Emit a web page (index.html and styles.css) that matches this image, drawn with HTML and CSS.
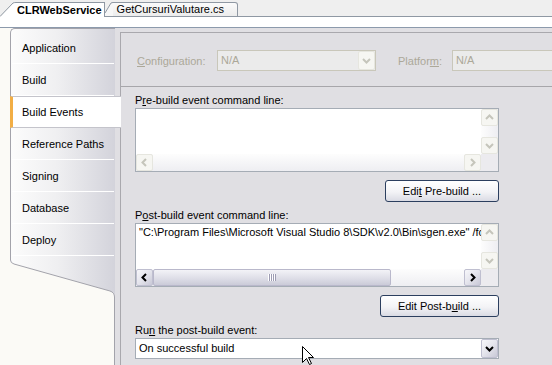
FILE: index.html
```html
<!DOCTYPE html>
<html lang="en">
<head>
  <meta charset="UTF-8" />
  <title>CLRWebService - Build Events</title>
  <link rel="stylesheet" href="styles.css">
</head>
<body>
  <!-- document tab strip -->
  <div class="doc-tabs">
    <svg class="tab-slant" width="16" height="17" viewBox="0 0 16 17">
      <path d="M0 17 L13 3.5 Q14 2 16 2 L16 17 Z" fill="#fff"/>
      <path d="M0 16.5 L13 3 Q14 2.5 16 2.5" fill="none" stroke="#8f98a3"/>
    </svg>
    <div class="doc-tab active">CLRWebService</div>
    <svg class="tab-peek" width="8" height="17" viewBox="0 0 8 17">
      <path d="M0 13 L6 3.5 Q7 2.5 8 2.5 L8 16 L0 16 Z" fill="#f7f7f7"/>
      <path d="M0 13 L6 3 Q7 2.5 8 2.5" fill="none" stroke="#8f98a3"/>
      <path d="M0 16.5 H8" stroke="#8f98a3"/>
    </svg>
    <div class="doc-tab">GetCursuriValutare.cs</div>
    <div class="doc-tabs-fill"></div>
  </div>
  <div class="doc-well"></div>

  <div class="designer">
    <!-- left property page tabs -->
    <div class="nav">
      <div class="nav-list">
        <div class="nav-item">Application</div>
        <div class="nav-item">Build</div>
        <div class="nav-item selected">Build Events</div>
        <div class="nav-item">Reference Paths</div>
        <div class="nav-item">Signing</div>
        <div class="nav-item">Database</div>
        <div class="nav-item">Deploy</div>
      </div>
      <svg class="nav-tail" width="105" height="41" viewBox="0 0 105 41">
        <defs>
          <linearGradient id="navGrad" x1="0" y1="0" x2="105" y2="0" gradientUnits="userSpaceOnUse">
            <stop offset="0" stop-color="#fcfcfc"/>
            <stop offset="0.45" stop-color="#efeff1"/>
            <stop offset="1" stop-color="#d3d3db"/>
          </linearGradient>
        </defs>
        <path d="M0 0 V4 Q0 7 4 8 L100 35 Q105 36.5 105 41 V0 Z" fill="url(#navGrad)"/>
        <path d="M0.5 0 V4 Q0.5 7 4 8 L100 35 Q104.5 36.5 104.5 41" fill="none" stroke="#a3a3ab"/>
      </svg>
      <div class="nav-rest"></div>
    </div>

    <!-- build events page -->
    <div class="page">
      <div class="page-inner">
        <div class="cfg-row">
          <span class="cfg-label"><u>C</u>onfiguration:</span>
          <div class="combo disabled cfg-combo">
            <span class="combo-text">N/A</span>
            <span class="combo-btn">
              <svg width="15" height="17" viewBox="0 0 15 17"><polyline points="4,7 7.5,10.5 11,7"/></svg>
            </span>
          </div>
          <span class="cfg-label platform">Platfor<u>m</u>:</span>
          <div class="combo disabled platform-combo">
            <span class="combo-text">N/A</span>
          </div>
        </div>

        <div class="separator"></div>

        <div class="events">
          <div class="field-label">P<u>r</u>e-build event command line:</div>
          <div class="cmd-box">
            <div class="box-text"></div>
            <div class="vscroll">
              <span class="sb-btn off"><svg width="15" height="15" viewBox="0 0 15 15"><polyline points="4,9 7.5,5.5 11,9"/></svg></span>
              <span class="sb-track"></span>
              <span class="sb-btn off"><svg width="15" height="15" viewBox="0 0 15 15"><polyline points="4,6 7.5,9.5 11,6"/></svg></span>
            </div>
            <div class="hscroll">
              <span class="sb-btn off"><svg width="15" height="15" viewBox="0 0 15 15"><polyline points="9,4 5.5,7.5 9,11"/></svg></span>
              <span class="sb-track"></span>
              <span class="sb-btn off"><svg width="15" height="15" viewBox="0 0 15 15"><polyline points="6,4 9.5,7.5 6,11"/></svg></span>
            </div>
            <div class="sb-corner"></div>
          </div>
          <div class="btn-row">
            <button class="btn btn-pre">Edi<u>t</u> Pre-build ...</button>
          </div>

          <div class="field-label">P<u>o</u>st-build event command line:</div>
          <div class="cmd-box">
            <div class="box-text">"C:\Program Files\Microsoft Visual Studio 8\SDK\v2.0\Bin\sgen.exe" /force</div>
            <div class="vscroll">
              <span class="sb-btn off"><svg width="15" height="15" viewBox="0 0 15 15"><polyline points="4,9 7.5,5.5 11,9"/></svg></span>
              <span class="sb-track"></span>
              <span class="sb-btn off"><svg width="15" height="15" viewBox="0 0 15 15"><polyline points="4,6 7.5,9.5 11,6"/></svg></span>
            </div>
            <div class="hscroll">
              <span class="sb-btn"><svg width="15" height="15" viewBox="0 0 15 15"><polyline points="9,4 5.5,7.5 9,11"/></svg></span>
              <span class="sb-thumb">
                <svg width="8" height="7" viewBox="0 0 8 7">
                  <path d="M0.5 0 V7 M2.5 0 V7 M4.5 0 V7 M6.5 0 V7" stroke="#fff"/>
                  <path d="M1.5 0 V7 M3.5 0 V7 M5.5 0 V7 M7.5 0 V7" stroke="#9d9cb3"/>
                </svg>
              </span>
              <span class="sb-track"></span>
              <span class="sb-btn"><svg width="15" height="15" viewBox="0 0 15 15"><polyline points="6,4 9.5,7.5 6,11"/></svg></span>
            </div>
            <div class="sb-corner"></div>
          </div>
          <div class="btn-row">
            <button class="btn btn-post">Edit Post-b<u>u</u>ild ...</button>
          </div>

          <div class="field-label">Ru<u>n</u> the post-build event:</div>
          <div class="combo">
            <span class="combo-text">On successful build</span>
            <span class="combo-btn">
              <svg width="15" height="17" viewBox="0 0 15 17"><polyline points="4,7 7.5,10.5 11,7"/></svg>
            </span>
          </div>
        </div>
      </div>
    </div>
  </div>

  <svg class="cursor" width="13" height="20" viewBox="0 0 13 20">
    <path d="M0.5 0.5 L0.5 16.5 L4.5 12.5 L7.5 18.5 L9.5 17.5 L6.5 11.5 L11.5 11.5 Z" fill="#fff" stroke="#000"/>
  </svg>
</body>
</html>
```

FILE: styles.css
```css
/* page */
html, body {
  margin: 0;
  padding: 0;
}
body {
  width: 552px;
  height: 365px;
  overflow: hidden;
  position: relative;
  font-family: "Liberation Sans", Arial, sans-serif;
  font-size: 11px;
  color: #000;
  background: #fbfaf6;
}
u {
  text-decoration: underline;
  text-underline-offset: 1px;
}

/* document tab strip */
.doc-tabs {
  display: flex;
  height: 17px;
  background: #efefef;
}
.tab-slant,
.tab-peek {
  flex-shrink: 0;
  display: block;
}
.doc-tab {
  flex-shrink: 0;
  margin-top: 2px;
  height: 15px;
  box-sizing: border-box;
  border-top: 1px solid #8f98a3;
  border-right: 1px solid #8f98a3;
  border-bottom: 1px solid #8f98a3;
  border-top-right-radius: 3px;
  padding: 0 13px 0 4px;
  line-height: 13px;
  background: linear-gradient(#fbfbfb, #ececec);
  white-space: nowrap;
}
.doc-tab.active {
  height: 15px;
  border-bottom: none;
  border-radius: 0;
  padding: 0 2px 0 1px;
  background: #fff;
  font-weight: bold;
  line-height: 14px;
}
.doc-tabs-fill {
  flex: 1;
  border-bottom: 1px solid #8f98a3;
}
.doc-well {
  height: 10px;
  background: #fff;
  border-bottom: 1px solid #8c9aac;
}

/* designer body */
.designer {
  display: flex;
  height: 337px;
}

/* left tabs */
.nav {
  width: 115px;
  flex-shrink: 0;
  box-sizing: border-box;
  padding-left: 10px;
  display: flex;
  flex-direction: column;
  background: #fbfaf6;
}
.nav-list {
  border-left: 1px solid #a3a3ab;
  border-top: 1px solid #a3a3ab;
  border-top-left-radius: 5px;
  padding-top: 3px;
  background: linear-gradient(to right, #fcfcfc, #efeff1 45%, #d3d3db);
}
.nav-item {
  height: 32px;
  box-sizing: border-box;
  padding-left: 11px;
  display: flex;
  align-items: center;
  white-space: nowrap;
  background: linear-gradient(#fff, #fff) no-repeat 1px 100% / 102px 1px;
}
.nav-item.selected {
  position: relative;
  z-index: 1;
  margin: 0 -6px 0 -1px;
  padding-left: 9px;
  border-left: 3px solid #f2ae45;
  border-top: 1px solid #c4c4cb;
  border-bottom: 1px solid #c4c4cb;
  background: #fff;
}
.nav-tail {
  display: block;
  flex-shrink: 0;
}
.nav-rest {
  flex: 1;
  border-right: 1px solid #a3a3ab;
}

/* right page */
.page {
  flex: 1;
  min-width: 0;
  overflow: hidden;
  padding: 4px 0 0 5px;
  background: #e0dfe3;
}
.page-inner {
  height: 100%;
  box-sizing: border-box;
  border-left: 1px solid #a9a8ad;
  border-top: 1px solid #a9a8ad;
  padding: 17px 0 0 14px;
}

/* configuration row */
.cfg-row {
  display: flex;
  align-items: center;
  height: 21px;
}
.cfg-label {
  flex-shrink: 0;
  width: 82px;
  box-sizing: border-box;
  padding-left: 2px;
  color: #aca899;
}
.cfg-label.platform {
  width: 54px;
  padding-left: 0;
  margin-left: 22px;
}
.cfg-combo {
  width: 159px;
}
.platform-combo {
  width: 120px;
}
.separator {
  margin: 15px 0 0 -14px;
  border-top: 1px solid #a7a6aa;
}

/* command line fields */
.events {
  width: 364px;
  display: flex;
  flex-direction: column;
}
.field-label {
  margin-top: 6px;
  line-height: 14px;
  white-space: nowrap;
}
.cmd-box {
  margin-top: 1px;
  height: 64px;
  box-sizing: border-box;
  border: 1px solid #a5acb5;
  background: #fff;
  display: grid;
  grid-template-columns: 1fr 17px;
  grid-template-rows: 1fr 17px;
}
.box-text {
  min-width: 0;
  padding: 1px 3px;
  line-height: 14px;
  white-space: nowrap;
  overflow: hidden;
}

/* scrollbars */
.vscroll {
  display: flex;
  flex-direction: column;
  background: linear-gradient(to right, #fdfdfd, #eeeef2);
}
.hscroll {
  display: flex;
  background: linear-gradient(#fdfdfd, #eeeef2);
}
.sb-track {
  flex: 1;
}
.sb-corner {
  background: #ecebef;
}
.sb-btn {
  width: 17px;
  height: 17px;
  flex-shrink: 0;
  box-sizing: border-box;
  border: 1px solid #bfbfd0;
  border-radius: 2px;
  background: linear-gradient(135deg, #f7f7fa, #e4e4ec 50%, #c8c8d6);
  display: flex;
  align-items: center;
  justify-content: center;
  color: #000;
}
.sb-btn.off {
  border-color: #e6e6df;
  background: #f6f6f2;
  color: #c5c5bb;
}
.sb-btn svg polyline,
.combo-btn svg polyline {
  fill: none;
  stroke: currentColor;
  stroke-width: 2;
}
.sb-thumb {
  width: 238px;
  flex-shrink: 0;
  box-sizing: border-box;
  border: 1px solid #b9b8cb;
  border-radius: 2px;
  background: linear-gradient(#f3f3f7, #dcdce6 60%, #cbcbd8);
  display: flex;
  align-items: center;
  justify-content: center;
}

/* push buttons */
.btn-row {
  display: flex;
  justify-content: flex-end;
  margin-top: 8px;
}
.btn {
  height: 22px;
  padding: 0;
  border: 1px solid #2c3f5f;
  border-radius: 3px;
  background: linear-gradient(#fff, #f3f3f6 55%, #dadbe4);
  font-family: inherit;
  font-size: 11px;
  color: #000;
}
.btn-pre {
  width: 114px;
}
.btn-post {
  width: 119px;
}

/* combo boxes */
.combo {
  flex-shrink: 0;
  display: flex;
  height: 21px;
  margin-top: 1px;
  box-sizing: border-box;
  border: 1px solid #a5acb5;
  background: #fff;
}
.cfg-row .combo {
  margin-top: 0;
}
.combo-text {
  flex: 1;
  padding-left: 3px;
  line-height: 19px;
  white-space: nowrap;
  overflow: hidden;
}
.combo-btn {
  width: 17px;
  box-sizing: border-box;
  border: 1px solid #bfbfd0;
  border-radius: 2px;
  background: linear-gradient(135deg, #f7f7fa, #e4e4ec 50%, #c8c8d6);
  display: flex;
  align-items: center;
  justify-content: center;
  color: #000;
}
.combo.disabled {
  border-color: #c9c7ba;
  background: #ebebeb;
  color: #aca899;
}
.combo.disabled .combo-btn {
  border-color: #e6e6df;
  background: #f6f6f2;
  color: #c5c5bb;
}

/* mouse pointer over the combo */
.cursor {
  position: absolute;
  left: 302px;
  top: 346px;
}
```
